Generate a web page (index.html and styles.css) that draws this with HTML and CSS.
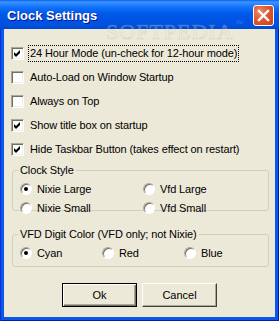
FILE: index.html
```html
<!DOCTYPE html>
<html>

<head>
    <link rel="stylesheet" href="styles.css">
</head>

<body>
    <div class="window">
        <div class="titlebar">
            <span class="title">Clock Settings</span>
            <button class="close">
                <svg width="13" height="13" viewBox="0 0 13 13">
                    <path d="M2 2 L11 11 M11 2 L2 11" stroke="#fff" stroke-width="2.4" fill="none" stroke-linecap="square"/>
                </svg>
            </button>
        </div>
        <div class="client">
            <div class="checks">
                <label class="check-row">
                    <span class="box"><svg width="9" height="9" viewBox="0 0 9 9"><path d="M1 3 L3 5 L7 1 V4 L3 8 L1 6 Z" fill="#000"/></svg></span>
                    <span class="text focus">24 Hour Mode (un-check for 12-hour mode)</span>
                </label>
                <label class="check-row">
                    <span class="box"></span>
                    <span class="text">Auto-Load on Window Startup</span>
                </label>
                <label class="check-row">
                    <span class="box"></span>
                    <span class="text">Always on Top</span>
                </label>
                <label class="check-row">
                    <span class="box"><svg width="9" height="9" viewBox="0 0 9 9"><path d="M1 3 L3 5 L7 1 V4 L3 8 L1 6 Z" fill="#000"/></svg></span>
                    <span class="text">Show title box on startup</span>
                </label>
                <label class="check-row">
                    <span class="box"><svg width="9" height="9" viewBox="0 0 9 9"><path d="M1 3 L3 5 L7 1 V4 L3 8 L1 6 Z" fill="#000"/></svg></span>
                    <span class="text">Hide Taskbar Button (takes effect on restart)</span>
                </label>
            </div>

            <fieldset class="group style-group">
                <legend>Clock Style</legend>
                <div class="radios style-radios">
                    <label class="radio-row"><span class="dot on"></span>Nixie Large</label>
                    <label class="radio-row"><span class="dot"></span>Vfd Large</label>
                    <label class="radio-row"><span class="dot"></span>Nixie Small</label>
                    <label class="radio-row"><span class="dot"></span>Vfd Small</label>
                </div>
            </fieldset>

            <fieldset class="group color-group">
                <legend>VFD Digit Color (VFD only; not Nixie)</legend>
                <div class="radios color-radios">
                    <label class="radio-row"><span class="dot on"></span>Cyan</label>
                    <label class="radio-row"><span class="dot"></span>Red</label>
                    <label class="radio-row"><span class="dot"></span>Blue</label>
                </div>
            </fieldset>

            <div class="buttons">
                <button class="btn default">Ok</button>
                <button class="btn">Cancel</button>
            </div>
        </div>
        <div class="watermark">SOFTPEDIA<span class="tm">™</span></div>
    </div>
</body>

</html>
```

FILE: styles.css
```css
body {
    margin: 0;
    font-family: "Liberation Sans", Arial, sans-serif;
    font-size: 11px;
    letter-spacing: -0.12px;
    color: #000;
}

.window {
    position: relative;
    width: 279px;
    height: 321px;
    box-sizing: border-box;
    background: #0A57E8;
    box-shadow: inset 1px 0 #0831D9, inset -1px 0 #001EA0, inset 0 -1px #001EA0;
    display: flex;
    flex-direction: column;
    overflow: hidden;
}

.titlebar {
    height: 29px;
    flex: none;
    display: flex;
    align-items: center;
    justify-content: space-between;
    padding: 0 5px 0 7px;
    background: linear-gradient(to bottom, #0A5FF0 0, #3D95FF 2px, #2A86FF 4px, #0D6FF8 8px, #0058E8 14px, #0054E3 20px, #0050DC 26px, #0047D0 29px);
}

.title {
    font-family: "Liberation Sans", Arial, sans-serif;
    font-weight: bold;
    font-size: 13px;
    letter-spacing: 0;
    color: #fff;
    text-shadow: 1px 1px #0F1089;
    margin-top: 1px;
}

.close {
    width: 21px;
    height: 21px;
    padding: 0;
    border: 1px solid #fff;
    border-radius: 3px;
    background: radial-gradient(circle at 30% 30%, #F0876A 0, #E0582F 45%, #C8401E 100%);
    display: flex;
    align-items: center;
    justify-content: center;
    margin-top: 2px;
}

.client {
    flex: 1;
    margin: 0 4px 4px 4px;
    background: #ECE9D8;
    display: flex;
    flex-direction: column;
}

.checks {
    padding: 12px 0 0 7px;
    display: flex;
    flex-direction: column;
}

.check-row {
    height: 24px;
    display: flex;
    align-items: center;
}

.box {
    width: 13px;
    height: 13px;
    box-sizing: border-box;
    background: #fff;
    border: 1px solid;
    border-color: #ACA899 #fff #fff #ACA899;
    box-shadow: inset 1px 1px #716F64, inset -1px -1px #F1EFE2;
    display: flex;
    align-items: center;
    justify-content: center;
}

.text {
    margin-left: 4px;
    padding: 1px 1px;
    line-height: 13px;
    border: 1px solid transparent;
}

.text.focus {
    border: 1px dotted #000;
}

.group {
    margin: 0 6px 0 8px;
    border: 1px solid #D0D0BF;
    border-radius: 3px;
    padding: 0 0 0 7px;
    min-width: 0;
}

.group legend {
    padding: 0 2px;
    margin-left: -2px;
    line-height: 13px;
}

.style-group {
    margin-top: 3px;
    height: 47px;
    box-sizing: border-box;
}

.color-group {
    margin-top: 17px;
    padding-bottom: 4px;
}

.radios {
    display: grid;
    padding-top: 2px;
}

.style-radios {
    grid-template-columns: 123px 1fr;
    grid-auto-rows: 19px;
}

.color-radios {
    grid-template-columns: 82px 82px 1fr;
    grid-auto-rows: 19px;
}

.radio-row {
    display: flex;
    align-items: center;
}

.dot {
    width: 12px;
    height: 12px;
    box-sizing: border-box;
    border-radius: 50%;
    background: #fff;
    border: 1px solid;
    border-color: #ACA899 #fff #fff #ACA899;
    box-shadow: inset 1px 1px #716F64;
    margin-right: 5px;
    display: flex;
    align-items: center;
    justify-content: center;
}

.dot.on::after {
    content: "";
    width: 4px;
    height: 4px;
    border-radius: 50%;
    background: #000;
}

.buttons {
    margin-top: 16px;
    display: flex;
    justify-content: center;
    gap: 5px;
}

.btn {
    width: 75px;
    height: 24px;
    font-family: "Liberation Sans", Arial, sans-serif;
    font-size: 11px;
    color: #000;
    background: #ECE9D8;
    border: 1px solid;
    border-color: #fff #404040 #404040 #fff;
    box-shadow: inset -1px -1px #ACA899;
    padding: 0;
}

.btn.default {
    border-color: #000;
    box-shadow: inset 1px 1px #fff, inset -1px -1px #716F64, inset -2px -2px #ACA899;
}

.watermark {
    position: absolute;
    left: 106px;
    top: 19px;
    font-family: "Liberation Serif", serif;
    font-size: 22px;
    letter-spacing: 1px;
    color: rgba(255, 255, 255, 0.22);
    -webkit-text-stroke: 0.6px rgba(170, 170, 170, 0.35);
    pointer-events: none;
}

.watermark .tm {
    font-size: 8px;
    vertical-align: top;
    -webkit-text-stroke: 0;
    margin-left: 2px;
}
```
